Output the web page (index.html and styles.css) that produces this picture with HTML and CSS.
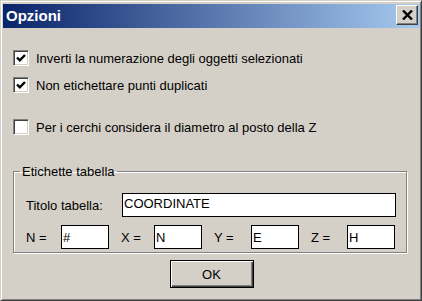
FILE: index.html
```html
<!DOCTYPE html>
<html>
<head>
    <title>Opzioni</title>
    <link rel="stylesheet" href="styles.css">
</head>
<body>
    <div class="window">
        <div class="titlebar">
            <span class="title">Opzioni</span>
            <button class="close" type="button">
                <svg width="11" height="10" viewBox="0 0 11 10"><path d="M1 0.5L10 9.5M10 0.5L1 9.5" stroke="#000" stroke-width="2.4" fill="none"/></svg>
            </button>
        </div>
        <div class="body">
            <label class="check first">
                <span class="box"><svg width="12" height="12" viewBox="0 0 12 12"><polyline points="2,5.5 4.8,8.3 10,3" stroke="#000" stroke-width="2.4" fill="none"/></svg></span>
                Inverti la numerazione degli oggetti selezionati
            </label>
            <label class="check">
                <span class="box"><svg width="12" height="12" viewBox="0 0 12 12"><polyline points="2,5.5 4.8,8.3 10,3" stroke="#000" stroke-width="2.4" fill="none"/></svg></span>
                Non etichettare punti duplicati
            </label>
            <label class="check spaced">
                <span class="box"></span>
                Per i cerchi considera il diametro al posto della Z
            </label>

            <fieldset class="group">
                <legend>Etichette tabella</legend>
                <div class="title-row">
                    <span class="lbl">Titolo tabella:</span>
                    <input class="field wide" type="text" value="COORDINATE">
                </div>
                <div class="coords">
                    <span class="lbl">N =</span><input class="field" type="text" value="#">
                    <span class="lbl pad">X =</span><input class="field" type="text" value="N">
                    <span class="lbl pad">Y =</span><input class="field" type="text" value="E">
                    <span class="lbl pad">Z =</span><input class="field" type="text" value="H">
                </div>
            </fieldset>

            <div class="actions">
                <button class="ok" type="button">OK</button>
            </div>
        </div>
    </div>
</body>
</html>
```

FILE: styles.css
```css
body { margin: 0; font-family: "Liberation Sans", Arial, sans-serif; font-size: 13px; color: #000; }
.window { width: 422px; height: 301px; box-sizing: border-box; background: #d4d0c8; border: 1px solid; border-color: #d4d0c8 #404040 #404040 #d4d0c8; box-shadow: inset 1px 1px 0 #fff, inset -1px -1px 0 #808080; padding: 3px 1px 1px 2px; }
.titlebar { height: 24px; display: flex; align-items: center; justify-content: space-between; padding: 0 2px 0 3px; background: linear-gradient(to right, #0a246a, #a6caf0); }
.title { color: #fff; font-weight: bold; font-size: 15px; margin-bottom: 2px; }
.close { width: 22px; height: 20px; padding: 0; margin-bottom: 2px; display: flex; align-items: center; justify-content: center; background: #d4d0c8; border: 1px solid; border-color: #fff #404040 #404040 #fff; box-shadow: inset -1px -1px 0 #808080; }

.check { display: flex; align-items: center; gap: 7px; height: 16px; margin: 11px 0 0 10px; }
.check.first { margin-top: 22px; }
.check.spaced { margin-top: 26px; }
.box { width: 16px; height: 16px; box-sizing: border-box; display: flex; align-items: center; justify-content: center; background: #fff; border: 1px solid; border-color: #808080 #fff #fff #808080; box-shadow: inset 1px 1px 0 #404040, inset -1px -1px 0 #d4d0c8; }

.group { margin: 29px 0 0 10px; width: 394px; box-sizing: border-box; padding: 14px 10px 3px 12px; border: 1px solid #808080; box-shadow: 1px 1px 0 #fff, inset 1px 1px 0 #fff; }
.group legend { line-height: 15px; padding: 0 2px; margin-left: -6px; }
.title-row { display: flex; align-items: center; }
.title-row .lbl { width: 96px; }
.field { height: 24px; box-sizing: border-box; border: 1px solid #000; background: #fff; padding: 0 0 0 1px; margin: 0; font: inherit; color: #000; outline: none; }
.wide { width: 274px; padding-bottom: 4px; }
.coords { display: grid; grid-template-columns: 35px 48px 45px 48px 49px 48px 48px 48px; align-items: center; margin-top: 8px; }
.coords .field { width: 48px; }
.coords .pad { padding-left: 12px; }

.actions { display: flex; justify-content: center; margin-top: 7px; }
.ok { width: 84px; height: 28px; padding: 0; font: inherit; color: #000; background: #d4d0c8; border: 1px solid #000; box-shadow: inset 1px 1px 0 #fff, inset -1px -1px 0 #404040, inset -2px -2px 0 #808080; }
```
